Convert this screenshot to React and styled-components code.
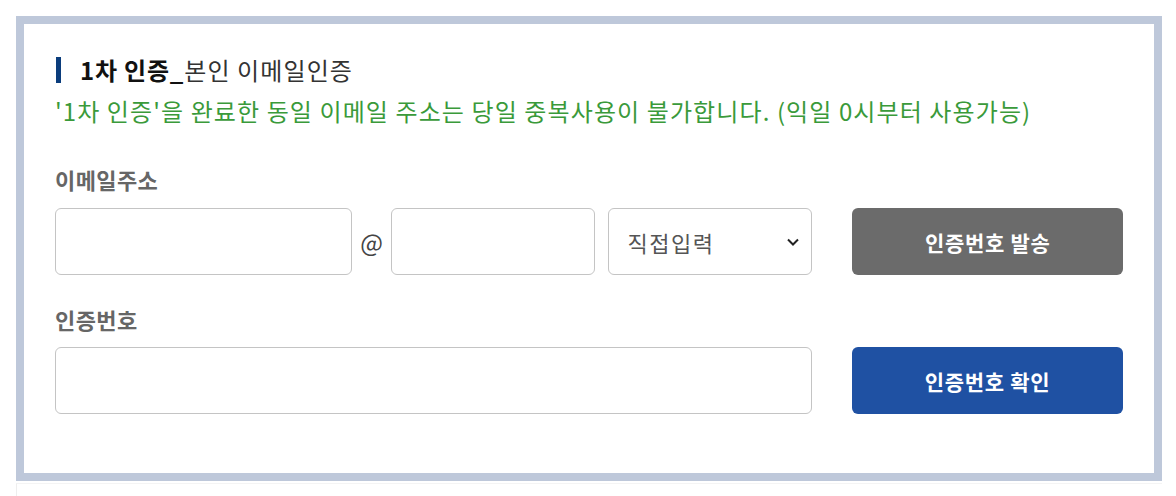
import styled, { createGlobalStyle } from "styled-components";

const GlobalStyle = createGlobalStyle`
  body {
    margin: 0;
    background: #fff;
    font-family: "Noto Sans CJK KR", "Noto Sans", sans-serif;
  }
`;

const Page = styled.div`
  padding: 16px 14px 0 16px;
`;

const Box = styled.section`
  border: 8px solid #bec8da;
  padding: 29px 31px 59px 31px;
  background: #fff;
`;

const NextBox = styled.div`
  margin-top: 2px;
  height: 12px;
  border-left: 1px solid #eeeeee;
  border-top: 1px solid #f4f4f4;
`;

const Title = styled.h2`
  margin: 0;
  display: flex;
  align-items: center;
  font-size: 24px;
  font-weight: 400;
  color: #333;
  line-height: 34px;
  letter-spacing: 1.1px;

  &::before {
    content: "";
    display: block;
    width: 5px;
    height: 26px;
    margin: 0 19px 0 1px;
    background: #0b3d7c;
  }

  strong {
    font-weight: 700;
    color: #111;
    letter-spacing: 0.8px;
  }
`;

const Notice = styled.p`
  margin: 6px 0 0;
  font-size: 24px;
  line-height: 36px;
  color: #3a9a3a;
  letter-spacing: 1.1px;
`;

const Label = styled.div`
  margin-top: ${({ $top }) => $top}px;
  margin-bottom: ${({ $bottom }) => $bottom}px;
  font-size: 22px;
  font-weight: 700;
  color: #666;
  line-height: 28px;
  letter-spacing: 0.4px;
`;

const Row = styled.div`
  display: flex;
  align-items: center;
`;

const Field = styled.input`
  box-sizing: border-box;
  width: ${({ $w }) => $w}px;
  height: 67px;
  border: 1px solid #c4c4c4;
  border-radius: 6px;
  padding: 0 18px;
  font-size: 22px;
  font-family: inherit;
  outline: none;
`;

const At = styled.span`
  width: 40px;
  text-align: center;
  font-size: 24px;
  color: #444;
`;

const SelectWrap = styled.div`
  position: relative;
  margin-left: 13px;
`;

const Select = styled.select`
  box-sizing: border-box;
  width: 204px;
  height: 67px;
  border: 1px solid #c4c4c4;
  border-radius: 6px;
  padding: 0 18px;
  font-size: 22px;
  letter-spacing: 1.5px;
  font-family: inherit;
  color: #555;
  background: #fff;
  appearance: none;
  outline: none;
`;

const Caret = styled.svg`
  position: absolute;
  right: 12px;
  top: 29px;
  pointer-events: none;
`;

const Button = styled.button`
  box-sizing: border-box;
  margin-left: 40px;
  width: 271px;
  height: 67px;
  border: none;
  border-radius: 6px;
  background: ${({ $bg }) => $bg};
  color: #fff;
  font-size: 21px;
  font-weight: 700;
  letter-spacing: 0.7px;
  font-family: inherit;
  cursor: pointer;
`;

export default function App() {
  return (
    <>
      <GlobalStyle />
      <Page>
        <Box>
          <Title>
            <strong>1차 인증_</strong>본인 이메일인증
          </Title>
          <Notice>'1차 인증'을 완료한 동일 이메일 주소는 당일 중복사용이 불가합니다. (익일 0시부터 사용가능)</Notice>

          <Label $top={36} $bottom={15}>이메일주소</Label>
          <Row>
            <Field $w={297} />
            <At>@</At>
            <Field $w={204} />
            <SelectWrap>
              <Select defaultValue="direct">
                <option value="direct">직접입력</option>
              </Select>
              <Caret width="14" height="10" viewBox="0 0 14 10">
                <path d="M2 2.5 L7 7.5 L12 2.5" fill="none" stroke="#222" strokeWidth="2" />
              </Caret>
            </SelectWrap>
            <Button $bg="#6b6b6b">인증번호 발송</Button>
          </Row>

          <Label $top={30} $bottom={14}>인증번호</Label>
          <Row>
            <Field $w={757} />
            <Button $bg="#1f51a3">인증번호 확인</Button>
          </Row>
        </Box>
        <NextBox />
      </Page>
    </>
  );
}
